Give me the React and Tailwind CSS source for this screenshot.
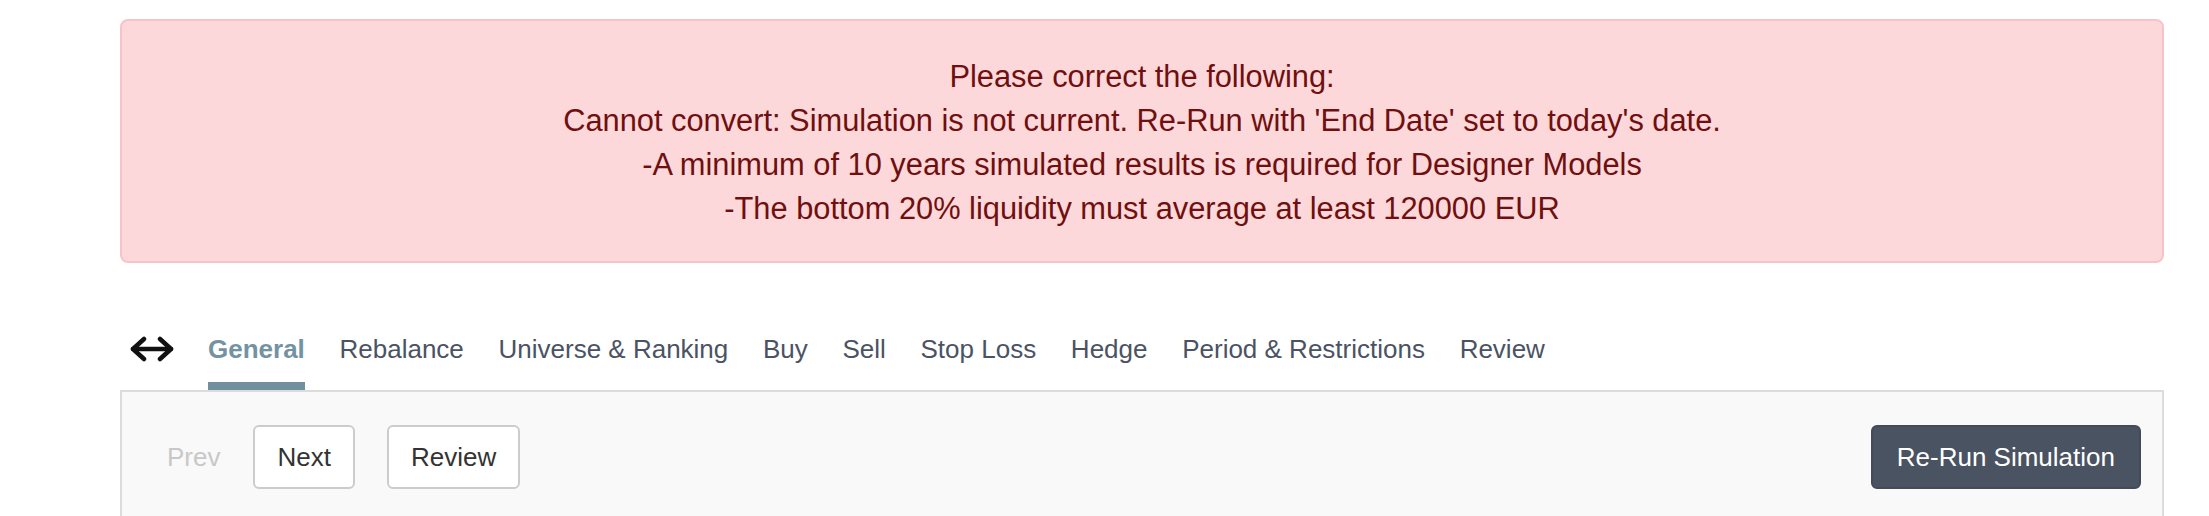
import React from 'react';

const tabs = ['General', 'Rebalance', 'Universe & Ranking', 'Buy', 'Sell', 'Stop Loss', 'Hedge', 'Period & Restrictions', 'Review'];

const errors = [
  'Please correct the following:',
  "Cannot convert: Simulation is not current. Re-Run with 'End Date' set to today's date.",
  '-A minimum of 10 years simulated results is required for Designer Models',
  '-The bottom 20% liquidity must average at least 120000 EUR',
];

function ExpandIcon() {
  return (
    <svg width="46" height="26" viewBox="0 0 46 26" fill="none" stroke="#111" strokeWidth="4.5" strokeLinecap="round" strokeLinejoin="round">
      <path d="M4 13H42" />
      <path d="M15 3L4 13L15 23" />
      <path d="M31 3L42 13L31 23" />
    </svg>
  );
}

export default function App() {
  return (
    <div className="h-[516px] overflow-hidden bg-white pt-[19px]" style={{ fontFamily: '"Liberation Sans", Arial, sans-serif' }}>
      <div className="ml-[120px] w-[2044px]">

        <div className="rounded-[8px] border-2 border-[#f8c3c8] bg-[#fcd8da] pt-[34px] pb-[30px] text-center text-[30.8px] leading-[44px] text-[#700f0f]">
          {errors.map(e => (
            <div key={e}>{e}</div>
          ))}
        </div>

        <div className="mt-[71px] flex items-start pl-[9px]">
          <div className="flex h-[30px] items-center pr-[33px]">
            <ExpandIcon />
          </div>
          <div className="flex gap-[34.7px]">
            {tabs.map((t, i) => (
              <span
                key={t}
                className={
                  i === 0
                    ? 'border-b-[8px] border-[#7090a0] pb-[18px] text-[26px] leading-[30px] font-bold text-[#7393a3]'
                    : 'border-b-[8px] border-transparent pb-[18px] text-[26px] leading-[30px] text-[#4a5364]'
                }
              >
                {t}
              </span>
            ))}
          </div>
        </div>

        <div className="h-[200px] border-2 border-[#dcdcdc] bg-[#f9f9f9] px-[21px] pt-[33px]">
          <div className="flex items-center justify-between text-[26px]">
            <div className="flex items-center">
              <span className="ml-[24px] text-[#c8c8c8]">Prev</span>
              <button className="ml-[33px] rounded-[6px] border-2 border-[#cccccc] bg-white px-[22px] py-[12px] leading-[36px] text-[#333]">
                Next
              </button>
              <button className="ml-[32px] rounded-[6px] border-2 border-[#cccccc] bg-white px-[22px] py-[12px] leading-[36px] text-[#333]">
                Review
              </button>
            </div>
            <button className="rounded-[6px] border-2 border-[#434b57] bg-[#4a5361] px-[24px] py-[12px] leading-[36px] text-white">
              Re-Run Simulation
            </button>
          </div>
        </div>

      </div>
    </div>
  );
}
